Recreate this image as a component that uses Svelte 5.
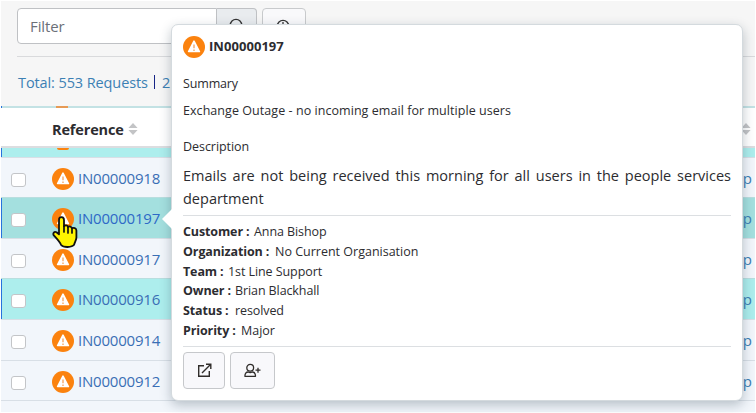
<script>
  const rows = [
    { id: 'IN00000918', h: 40, tone: 'plain' },
    { id: 'IN00000197', h: 41, tone: 'active' },
    { id: 'IN00000917', h: 40, tone: 'plain' },
    { id: 'IN00000916', h: 41, tone: 'cyan' },
    { id: 'IN00000914', h: 41, tone: 'plain' },
    { id: 'IN00000912', h: 40, tone: 'plain' }
  ];
  const details = [
    { label: 'Customer :', value: 'Anna Bishop', lw: 67, ls: -0.08 },
    { label: 'Organization :', value: 'No Current Organisation', lw: 88, ls: 0 },
    { label: 'Team :', value: '1st Line Support', lw: 41, ls: -0.08 },
    { label: 'Owner :', value: 'Brian Blackhall', lw: 48, ls: -0.1 },
    { label: 'Status :', value: 'resolved', lw: 46, gap: 6, ls: -0.1 },
    { label: 'Priority :', value: 'Major', lw: 54, ls: 0 }
  ];
</script>

{#snippet warning()}
  <svg class="warn" viewBox="0 0 22 22">
    <circle cx="11" cy="11" r="11" fill="#fb820e" />
    <path d="M11 5.2 L16.4 15.5 H5.6 Z" fill="#fff" stroke="#fff" stroke-width="1.6" stroke-linejoin="round" />
    <path d="M11 8.4 V12.3 M11 13.5 V15" stroke="#f5a765" stroke-width="1.4" />
  </svg>
{/snippet}

{#snippet sorter()}
  <svg class="sorter" viewBox="0 0 10 12">
    <path d="M5 0 L9.6 5 H.4 Z M5 12 L.4 7 H9.6 Z" fill="#c3c4c6" />
  </svg>
{/snippet}

<div class="page">
  <div class="app">
    <header class="toolbar">
      <div class="controls">
        <div class="filter"><span>Filter</span></div>
        <div class="search">
          <svg width="16" height="16" viewBox="0 0 16 16" fill="none" stroke="#333" stroke-width="1.3"><circle cx="7" cy="7" r="5.7" /><path d="M11 11 L15 15" /></svg>
        </div>
        <div class="clock">
          <svg width="14" height="14" viewBox="0 0 14 14" fill="none" stroke="#333" stroke-width="1.3"><circle cx="7" cy="7" r="5.7" /><path d="M7 3 V7 H10" /></svg>
        </div>
      </div>
      <div class="totals"><span class="total">Total: 553 Requests</span><i></i><span>2</span></div>
    </header>
    <div class="sliver upper"><b></b></div>
    <div class="head">
      <strong>Reference</strong>
      {@render sorter()}
      <div class="far">{@render sorter()}</div>
    </div>
    <div class="sliver lower"><b></b></div>
    {#each rows as row}
      <div class="row {row.tone}" style="height:{row.h}px">
        <span class="check"></span>
        <span class="icon">{@render warning()}</span>
        <span class="link">{row.id}</span>
        <span class="tail">p</span>
      </div>
    {/each}
    <div class="rest"></div>
  </div>

  <section class="popover">
    <svg class="arrow" width="12" height="24" viewBox="0 0 12 24"><path d="M12 1 L1 12 L12 23 Z" fill="#fff" /></svg>
    <div class="title">{@render warning()}<strong>IN00000197</strong></div>
    <p class="small summary">Summary</p>
    <p class="small subject">Exchange Outage - no incoming email for multiple users</p>
    <p class="small desc">Description</p>
    <p class="body">Emails are not being received this morning for all users in the people services department</p>
    <div class="details">
      {#each details as d}
        <div class="detail">
          <strong style="width:{d.lw}px">{d.label}</strong>
          <span style="margin-left:{d.gap ?? 4}px;letter-spacing:{d.ls}px">{d.value}</span>
        </div>
      {/each}
    </div>
    <div class="actions">
      <div class="btn">
        <svg width="15" height="15" viewBox="0 0 15 15" fill="none" stroke="#302d2b" stroke-width="1.4"><path d="M7 2.7 H1.7 V13.3 H12.3 V8" /><path d="M5 10 L13 2 M9 1.2 H13.8 V6" /></svg>
      </div>
      <div class="btn wide">
        <svg width="17" height="15" viewBox="0 0 17 15" fill="none" stroke="#302d2b" stroke-width="1.3" stroke-linejoin="round"><circle cx="6.2" cy="4.8" r="3.4" /><path d="M4.2 9 C2 9 .9 10.6 .9 13.3 H11.5 C11.5 10.6 10.4 9 8.2 9 C7 9.6 5.4 9.6 4.2 9 Z M11.5 7.2 H16.5 M14 4.7 V9.7" /></svg>
      </div>
    </div>
  </section>

  <svg class="pointer" width="27" height="33" viewBox="0 0 27 33">
    <path d="M9.2 1.2 C11.2 1.2 12 2.3 12 4 V10.2 C13.2 8.9 15.6 9.1 16 11 C17.4 9.9 19.6 10.4 20 12.3 C21.5 11.3 24.4 12 24.4 14.5 V21.5 C24.4 24 22.8 26 22.1 28.8 C20 31.6 11.5 31.8 9.1 29 C7.9 25.8 4.6 22.5 1.8 19.4 C.5 17.4 2.2 15 4.5 16.2 L7 18.3 V4 C7 2.2 7.8 1.2 9.2 1.2 Z" fill="#fff500" stroke="#111" stroke-width="1.8" stroke-linejoin="round" />
    <path d="M12 10 V16 M16 11 V17 M20 12.3 V17" stroke="#111" stroke-width="1.7" fill="none" stroke-linecap="round" />
  </svg>
</div>

<style>
  :global(body) { background: #fff; }
  .page { position: relative; width: 756px; height: 413px; overflow: hidden; font-family: "Open Sans", "Noto Sans", sans-serif; color: #2c2c30; }
  .page *, .page { box-sizing: border-box; }
  .app { display: flex; flex-direction: column; width: 756px; height: 413px; padding: 1px 1px 1px; }
  .toolbar { height: 105px; flex: none; background: #f6f6f6; padding: 7px 0 0 16px; }
  .controls { display: flex; height: 49px; border-bottom: 1px solid #d9dadc; align-items: flex-start; }
  .filter { width: 200px; height: 36px; border: 1px solid #bfc1c4; border-radius: 4px 0 0 4px; background: #fff; padding-left: 12px; font-size: 15px; line-height: 35px; color: #6b7078; letter-spacing: -.1px; }
  .search { width: 40px; height: 36px; border: 1px solid #bfc1c4; border-left: 0; border-radius: 0 4px 4px 0; background: #e9ecef; padding: 9px 0 0 12px; }
  .search svg, .clock svg { display: block; }
  .clock { width: 44px; height: 36px; margin-left: 5px; border: 1px solid #c8cacc; border-radius: 4px; background: #f9f9fb; padding: 10px 0 0 13px; }
  .totals { display: flex; height: 48px; align-items: center; font-size: 14.5px; color: #3c80b4; padding: 2px 0 0 1px; }
  .total { width: 133px; white-space: nowrap; letter-spacing: -.1px; }
  .totals i { width: 1px; height: 14px; margin: 0 7px 0 3px; background: #172586; }
  .sliver { flex: none; padding-left: 55px; }
  .sliver b { display: block; background: #fb820e; width: 12px; }
  .upper { height: 2px; background: #c3e2e4; box-shadow: inset 1px 0 #2772dc; }
  .upper b { height: 2px; background: #e69a55; }
  .head { display: flex; height: 40px; flex: none; align-items: center; background: #fff; border-bottom: 2px solid #dcdde0; padding-left: 51px; padding-top: 4px; }
  .head strong { font-size: 14.5px; width: 73px; letter-spacing: -.15px; white-space: nowrap; }
  .sorter { width: 10px; height: 12px; margin-left: 3px; display: block; }
  .far { margin-left: auto; margin-right: 4px; }
  .lower { height: 9px; background: #adeeed; box-shadow: inset 1px 0 #2772dc; padding-left: 56px; }
  .lower b { height: 2px; width: 12px; border-radius: 0 0 6px 6px; }
  .row { display: flex; flex: none; align-items: flex-start; border-top: 1px solid #d8dfe6; background: #f2f6fb; padding: 10px 3px 0 10px; }
  .cyan { background: #adeeed; box-shadow: inset 1px 0 #2772dc; border-color: #b9dedf; }
  .active { background: #a4e0df; box-shadow: inset 1px 0 #2772dc; border-color: #b9dedf; }
  .check { width: 15px; height: 14px; margin-top: 5px; border: 1px solid #c3c5c8; border-radius: 3px; background: #fff; }
  .icon { margin-left: 26px; height: 22px; }
  .warn { width: 22px; height: 22px; display: block; flex: none; }
  .link { margin-left: 4px; font-size: 15px; line-height: 21px; letter-spacing: -.2px; color: #3a6fb5; }
  .active .link { color: #2e69c7; }
  .tail { margin-left: auto; font-size: 15px; line-height: 21px; color: #3c80b4; }
  .rest { flex: 1; border-top: 1px solid #d8dfe6; background: #f2f6fb; }
  .popover { position: absolute; left: 171px; top: 24px; width: 572px; height: 377px; background: #fff; border: 1px solid #d4dade; border-radius: 7px; box-shadow: 0 4px 12px rgba(30,50,70,.28); padding: 11px 11px 0; }
  .arrow { position: absolute; left: -11px; top: 182px; }
  .title { display: flex; height: 22px; align-items: center; }
  .title strong { margin-left: 4px; font-size: 13px; letter-spacing: .05px; line-height: 20px; margin-top: -2px; }
  p { margin: 0; white-space: nowrap; }
  .small { font-size: 12.5px; line-height: 18px; letter-spacing: -.15px; }
  .summary { margin-top: 17px; }
  .subject { margin-top: 9px; letter-spacing: .055px; }
  .desc { margin-top: 18px; letter-spacing: -.05px; }
  .body { margin-top: 8px; height: 51px; font-size: 14.5px; line-height: 23px; white-space: normal; text-align: justify; }
  .details { height: 132px; border: 1px solid #dcdfe2; border-width: 1px 0; padding-top: 6px; font-size: 12.5px; }
  .detail { display: flex; height: 19.8px; line-height: 19.8px; white-space: nowrap; }
  .detail strong { letter-spacing: -.12px; }
  .actions { display: flex; gap: 5px; padding-top: 5px; }
  .btn { width: 42px; height: 37px; display: flex; align-items: center; justify-content: center; border: 1px solid #c6c8cb; border-radius: 4px; background: #f8f8fb; }
  .wide { width: 45px; }
  .pointer { position: absolute; left: 52px; top: 216px; }
</style>
